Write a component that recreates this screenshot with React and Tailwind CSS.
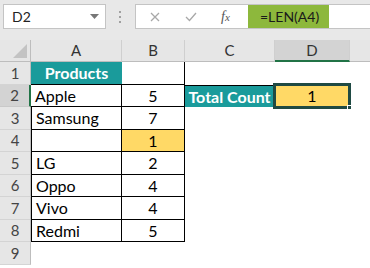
import React from 'react';

const FONT = { fontFamily: 'Lato, "Open Sans", sans-serif' };

const rowHeights = [23, 22, 23, 22, 23, 22, 23, 22, 23];

function RowHead({ n, h, active }) {
  return (
    <div
      className={`flex w-[31px] shrink-0 items-center justify-center border-b border-r text-[15px] text-[#444] ${
        active ? 'border-r-2 border-b-[#c9c9c9] border-r-[#217346] bg-[#d3d3d3]' : 'border-b-[#d4d4d4] border-r-[#bdbdbd] bg-[#e6e6e6]'
      }`}
      style={{ height: h }}
    >
      {n}
    </div>
  );
}

function Cell({ w, className = '', children }) {
  return (
    <div className={`flex shrink-0 items-center text-[16px] text-black ${w} ${className}`}>{children}</div>
  );
}

const products = [
  ['Apple', '5'],
  ['Samsung', '7'],
  ['', '1'],
  ['LG', '2'],
  ['Oppo', '4'],
  ['Vivo', '4'],
  ['Redmi', '5'],
];

export default function App() {
  return (
    <div className="h-[268px] w-[370px] overflow-hidden bg-white" style={FONT}>
      {/* formula bar */}
      <div className="flex h-[40px] w-[370px] items-start bg-[#e8e8e8] pt-[4px]">
        <div className="ml-[3px] flex h-[25px] w-[103px] shrink-0 items-center justify-between border border-[#c4c4c4] bg-white pl-[8px] pr-[6px]">
          <span className="text-[14px] text-[#222]">D2</span>
          <svg width="9" height="5" viewBox="0 0 9 5">
            <path d="M0 0 L9 0 L4.5 5 Z" fill="#777" />
          </svg>
        </div>
        <div className="ml-[13px] flex h-[25px] w-[2px] shrink-0 flex-col items-center justify-center gap-[3px]">
          <div className="h-[2px] w-[2px] bg-[#a0a0a0]" />
          <div className="h-[2px] w-[2px] bg-[#a0a0a0]" />
          <div className="h-[2px] w-[2px] bg-[#a0a0a0]" />
        </div>
        <div className="ml-[14px] flex h-[25px] w-[235px] shrink-0 items-stretch border border-r-0 border-[#c4c4c4] bg-white">
          <div className="flex w-[112px] shrink-0 items-center">
            <svg className="ml-[14px] shrink-0" width="10" height="10" viewBox="0 0 10 10">
              <path d="M1 1 L9 9 M9 1 L1 9" stroke="#a8a8a8" strokeWidth="1.3" />
            </svg>
            <svg className="ml-[25px] shrink-0" width="12" height="10" viewBox="0 0 12 10">
              <path d="M1 5 L4.5 8.5 L11 1" stroke="#a8a8a8" strokeWidth="1.3" fill="none" />
            </svg>
            <span
              className="ml-[24px] text-[14px] italic text-[#555]"
              style={{ fontFamily: '"Liberation Serif", serif' }}
            >
              f<span className="text-[11px]">x</span>
            </span>
          </div>
          <div className="flex w-[81px] shrink-0 items-center bg-[#8db83c] pl-[12px] text-[14px] text-[#1a1a1a]">
            =LEN(A4)
          </div>
        </div>
      </div>

      {/* column headers */}
      <div className="flex h-[22px]">
        <div className="relative w-[31px] shrink-0 border-b border-r border-[#bdbdbd] bg-[#e6e6e6]">
          <svg className="absolute bottom-[3px] right-[3px]" width="14" height="14" viewBox="0 0 14 14">
            <path d="M14 0 L14 14 L0 14 Z" fill="#c3c3c3" />
          </svg>
        </div>
        {[
          ['A', 'w-[91px]'],
          ['B', 'w-[63px]'],
          ['C', 'w-[90px]'],
        ].map(([l, w]) => (
          <div
            key={l}
            className={`flex shrink-0 items-center justify-center border-b border-r border-b-[#bdbdbd] border-r-[#cfcfcf] bg-[#e6e6e6] text-[15px] text-[#333] ${w}`}
          >
            {l}
          </div>
        ))}
        <div className="flex w-[75px] shrink-0 items-center justify-center border-b-2 border-r border-b-[#217346] border-r-[#cfcfcf] bg-[#d3d3d3] text-[15px] text-[#333]">
          D
        </div>
        <div className="flex-1 border-b border-[#bdbdbd] bg-[#e6e6e6]" />
      </div>

      {/* row 1 */}
      <div className="flex" style={{ height: rowHeights[0] }}>
        <RowHead n={1} h={rowHeights[0]} />
        <Cell w="w-[91px]" className="justify-center border-b border-black bg-[#1a9b9b] font-bold text-white">
          Products
        </Cell>
        <Cell w="w-[63px]" className="border-b border-r border-black" />
      </div>

      {/* rows 2-8 */}
      {products.map(([name, qty], i) => {
        const h = rowHeights[i + 1];
        return (
          <div key={i} className="flex" style={{ height: h }}>
            <RowHead n={i + 2} h={h} active={i === 0} />
            <Cell w="w-[91px]" className={`border-b border-r border-black pl-[4px] ${i === 0 ? '' : 'border-l'}`}>
              {name}
            </Cell>
            <Cell
              w="w-[63px]"
              className={`justify-center border-b border-r border-black ${i === 2 ? 'bg-[#ffd966]' : ''}`}
            >
              {qty}
            </Cell>
            {i === 0 && (
              <>
                <Cell w="w-[89px]" className="justify-center border-t border-black bg-[#1a9b9b] font-bold text-white">
                  Total Count
                </Cell>
                <div className="relative -my-[2px] ml-[-1px] flex w-[78px] items-center justify-center border-[3px] border-[#1f4a43] bg-[#ffd966] text-[16px] text-black">
                  1
                  <span className="absolute -bottom-[4px] -right-[4px] h-[5px] w-[5px] border border-white bg-[#1f4a43]" />
                </div>
              </>
            )}
          </div>
        );
      })}

      {/* row 9 */}
      <div className="flex" style={{ height: rowHeights[8] }}>
        <RowHead n={9} h={rowHeights[8]} />
      </div>
    </div>
  );
}
